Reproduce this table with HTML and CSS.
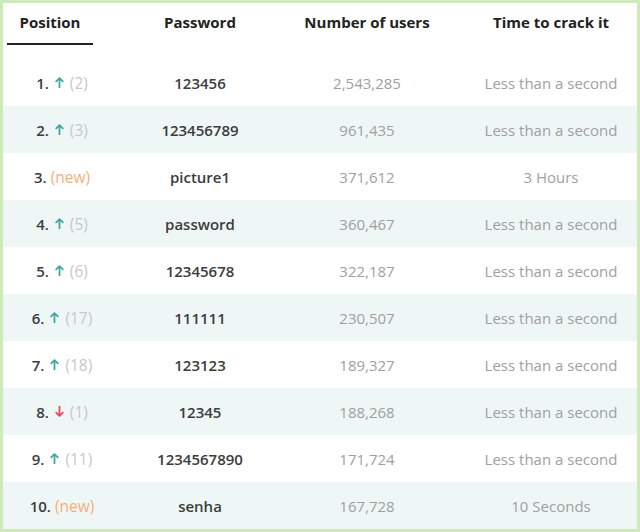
FILE: index.html
```html
<!DOCTYPE html>
<html>
<head>
<meta charset="utf-8">
<link rel="stylesheet" href="styles.css">
</head>
<body>
<div class="frame">
  <div class="row head">
    <div class="hcell hpos"><span class="tab">Position</span></div>
    <div class="hcell">Password</div>
    <div class="hcell">Number of users</div>
    <div class="hcell time">Time to crack it</div>
  </div>
  <div class="row">
    <div class="cell pos"><span class="rank">1.</span><svg class="arr up" viewBox="0 0 8 10"><path d="M4 9.5V1M1 4L4 1L7 4"/></svg><span class="prev">(2)</span></div>
    <div class="cell pw">123456</div>
    <div class="cell num">2,543,285</div>
    <div class="cell time num">Less than a second</div>
  </div>
  <div class="row alt">
    <div class="cell pos"><span class="rank">2.</span><svg class="arr up" viewBox="0 0 8 10"><path d="M4 9.5V1M1 4L4 1L7 4"/></svg><span class="prev">(3)</span></div>
    <div class="cell pw">123456789</div>
    <div class="cell num">961,435</div>
    <div class="cell time num">Less than a second</div>
  </div>
  <div class="row">
    <div class="cell pos"><span class="rank">3.</span><span class="new">(new)</span></div>
    <div class="cell pw">picture1</div>
    <div class="cell num">371,612</div>
    <div class="cell time num">3 Hours</div>
  </div>
  <div class="row alt">
    <div class="cell pos"><span class="rank">4.</span><svg class="arr up" viewBox="0 0 8 10"><path d="M4 9.5V1M1 4L4 1L7 4"/></svg><span class="prev">(5)</span></div>
    <div class="cell pw">password</div>
    <div class="cell num">360,467</div>
    <div class="cell time num">Less than a second</div>
  </div>
  <div class="row">
    <div class="cell pos"><span class="rank">5.</span><svg class="arr up" viewBox="0 0 8 10"><path d="M4 9.5V1M1 4L4 1L7 4"/></svg><span class="prev">(6)</span></div>
    <div class="cell pw">12345678</div>
    <div class="cell num">322,187</div>
    <div class="cell time num">Less than a second</div>
  </div>
  <div class="row alt">
    <div class="cell pos"><span class="rank">6.</span><svg class="arr up" viewBox="0 0 8 10"><path d="M4 9.5V1M1 4L4 1L7 4"/></svg><span class="prev">(17)</span></div>
    <div class="cell pw">111111</div>
    <div class="cell num">230,507</div>
    <div class="cell time num">Less than a second</div>
  </div>
  <div class="row">
    <div class="cell pos"><span class="rank">7.</span><svg class="arr up" viewBox="0 0 8 10"><path d="M4 9.5V1M1 4L4 1L7 4"/></svg><span class="prev">(18)</span></div>
    <div class="cell pw">123123</div>
    <div class="cell num">189,327</div>
    <div class="cell time num">Less than a second</div>
  </div>
  <div class="row alt">
    <div class="cell pos"><span class="rank">8.</span><svg class="arr down" viewBox="0 0 8 10"><path d="M4 0.5V9M1 6L4 9L7 6"/></svg><span class="prev">(1)</span></div>
    <div class="cell pw">12345</div>
    <div class="cell num">188,268</div>
    <div class="cell time num">Less than a second</div>
  </div>
  <div class="row">
    <div class="cell pos"><span class="rank">9.</span><svg class="arr up" viewBox="0 0 8 10"><path d="M4 9.5V1M1 4L4 1L7 4"/></svg><span class="prev">(11)</span></div>
    <div class="cell pw">1234567890</div>
    <div class="cell num">171,724</div>
    <div class="cell time num">Less than a second</div>
  </div>
  <div class="row alt">
    <div class="cell pos"><span class="rank">10.</span><span class="new">(new)</span></div>
    <div class="cell pw">senha</div>
    <div class="cell num">167,728</div>
    <div class="cell time num">10 Seconds</div>
  </div>
</div>
</body>
</html>
```
FILE: styles.css
```css
html, body {
  margin: 0;
  padding: 0;
  background: #ffffff;
}
.frame {
  width: 640px;
  height: 532px;
  box-sizing: border-box;
  border: 3px solid #cdeab9;
  border-bottom-width: 4px;
  background: #ffffff;
  font-family: "Open Sans", "Liberation Sans", sans-serif;
  font-size: 15px;
  color: #333333;
}
.row {
  display: grid;
  grid-template-columns: 94px 206px 128px 206px;
  height: 47px;
  align-items: center;
}
.row.head {
  height: 56px;
  align-items: start;
  font-weight: 700;
  font-size: 15px;
  color: #222222;
}
.row.alt {
  background: #eef7f6;
}
.cell, .hcell {
  text-align: center;
  white-space: nowrap;
}
.hcell {
  padding-top: 9px;
}
.hcell.hpos {
  padding-top: 0;
}
.tab {
  display: block;
  margin: 0 4px;
  padding-top: 9px;
  padding-bottom: 11px;
  border-bottom: 2px solid #222222;
}
.time {
  padding-left: 34px;
}
.cell.pos {
  padding-left: 24px;
  display: flex;
  align-items: center;
  justify-content: center;
}
.pw {
  font-weight: 600;
  color: #3c3c3c;
}
.num {
  color: #a0a0a0;
}
.rank {
  color: #3c3c3c;
  font-weight: 600;
  margin-right: 6px;
}
.arr {
  width: 9px;
  height: 11px;
  margin-right: 6px;
  fill: none;
  stroke-width: 1.6;
  stroke-linecap: round;
  stroke-linejoin: round;
}
.arr.up {
  stroke: #3ea79c;
}
.arr.down {
  stroke: #e8485a;
}
.prev {
  color: #c8c8c8;
  font-size: 15.5px;
}
.new {
  color: #f7ae78;
  font-size: 15.5px;
  margin-left: -2px;
}
```
